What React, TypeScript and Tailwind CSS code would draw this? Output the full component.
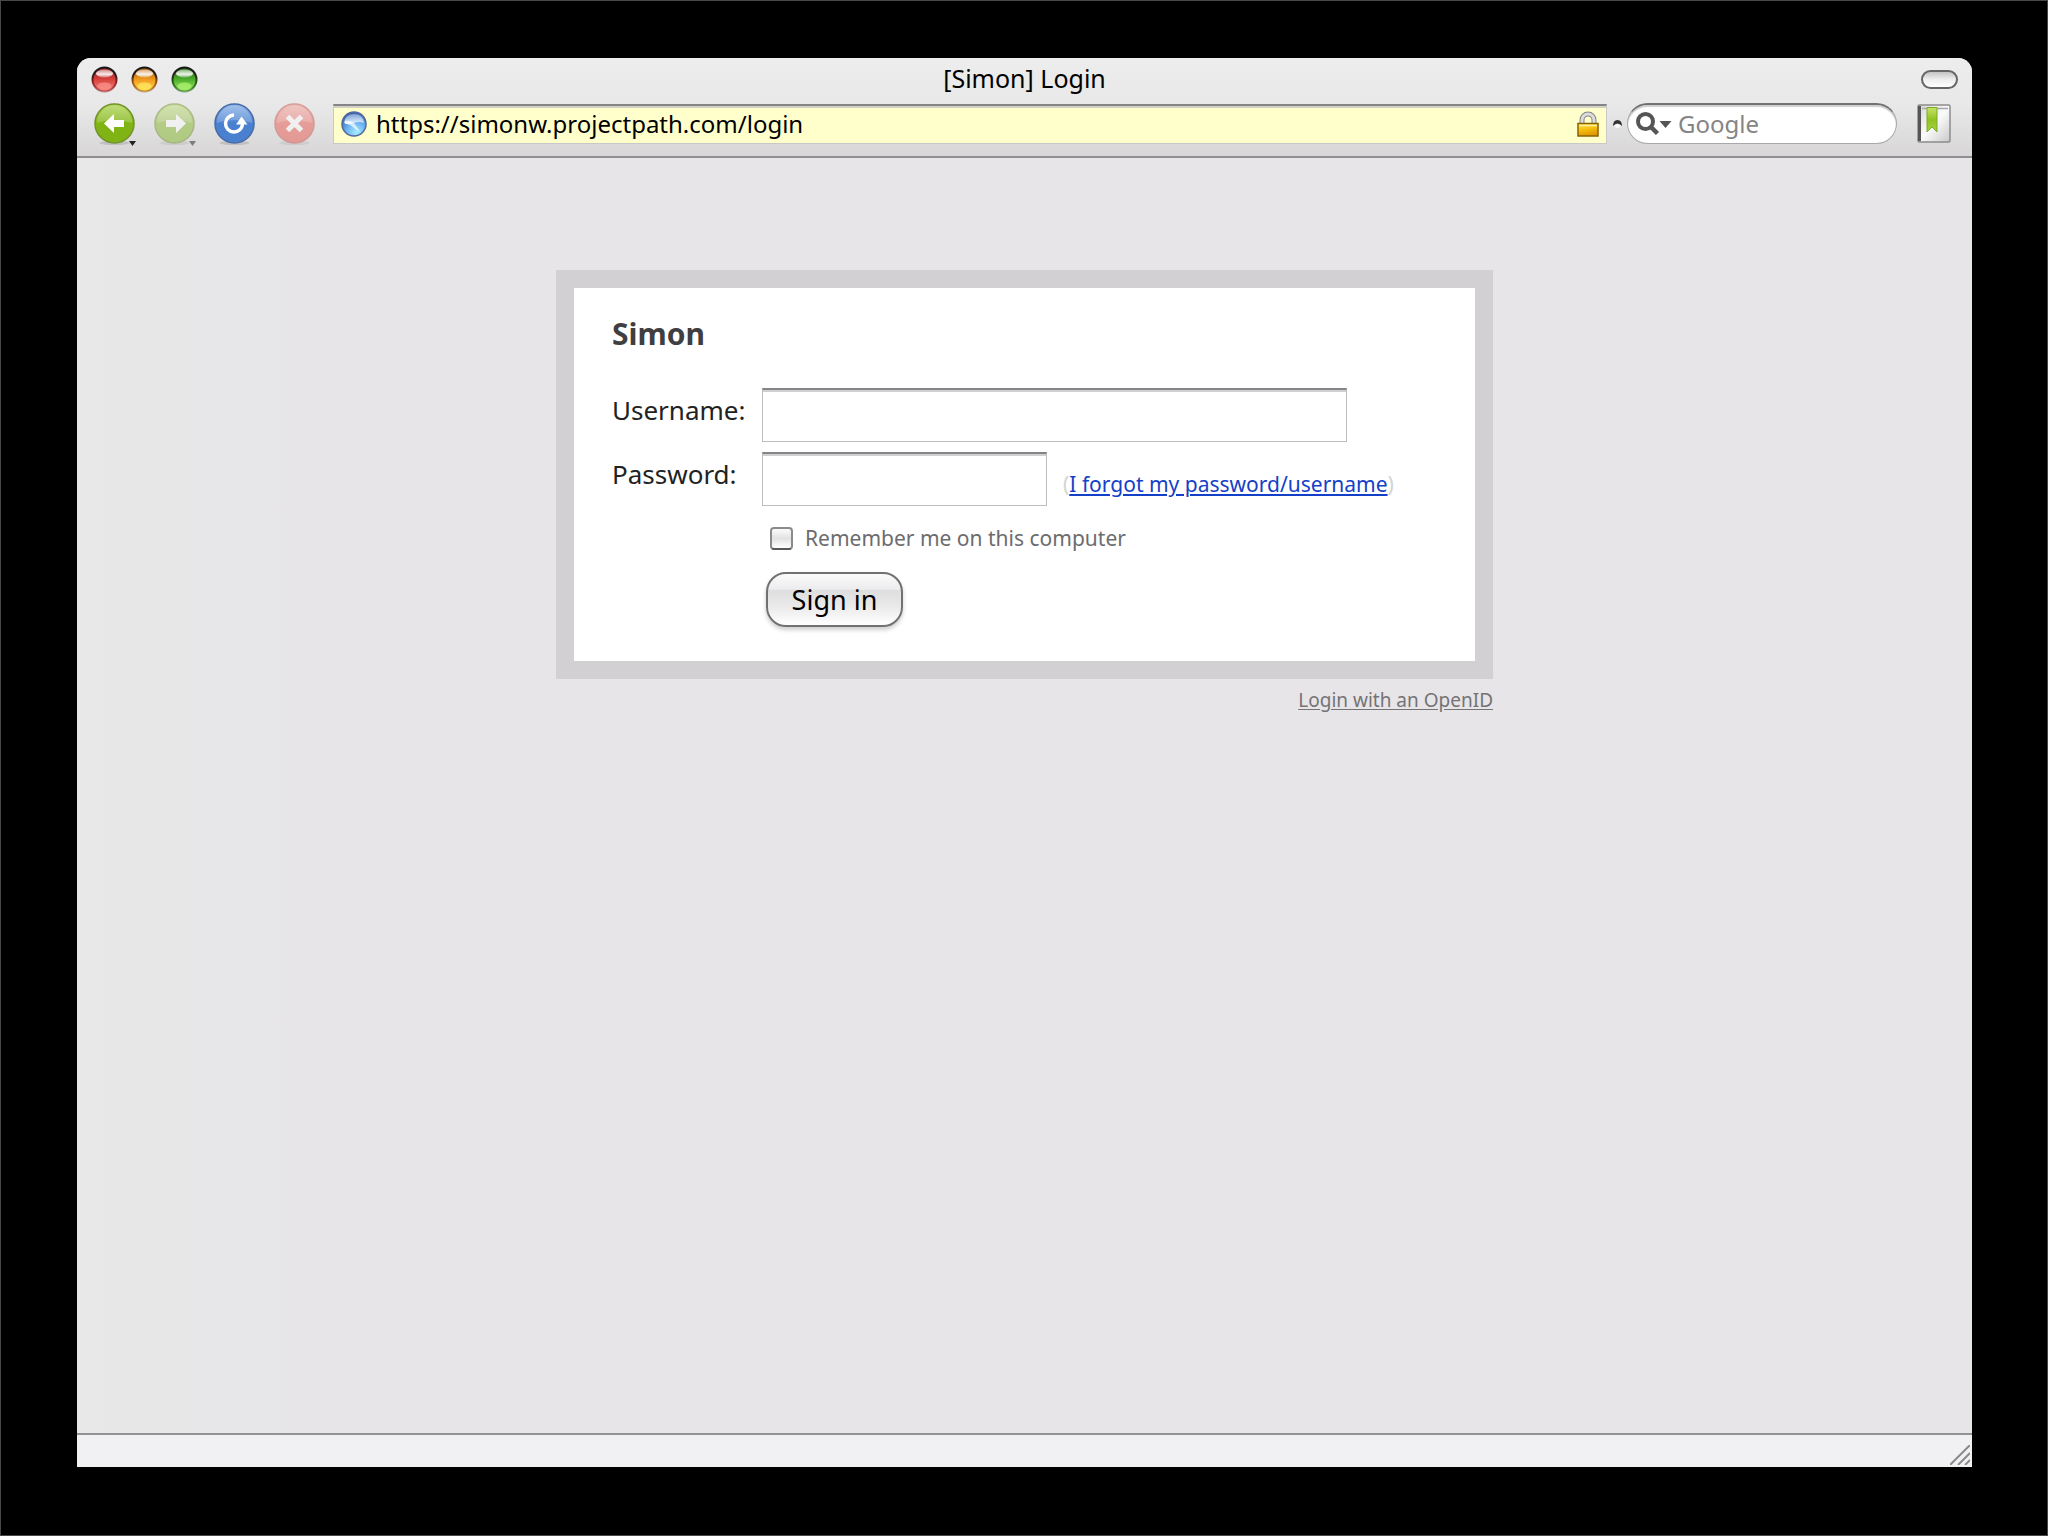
import React from "react";

function TrafficLight({ label, dark, mid, glow }: { label: string; dark: string; mid: string; glow: string }) {
  const id = label.toLowerCase();
  return (
    <button type="button" aria-label={label} className="size-[27px]">
      <svg viewBox="0 0 27 27" className="size-full">
        <defs>
          <linearGradient id={`${id}-body`} x1="0" y1="0" x2="0" y2="1">
            <stop offset="0" stopColor={dark} />
            <stop offset="0.5" stopColor={mid} />
            <stop offset="1" stopColor={glow} />
          </linearGradient>
          <linearGradient id={`${id}-rim`} x1="0" y1="0" x2="0" y2="1">
            <stop offset="0" stopColor="#151515" />
            <stop offset="0.35" stopColor="#2b2020" />
            <stop offset="0.6" stopColor={dark} />
            <stop offset="1" stopColor={dark} stopOpacity="0.5" />
          </linearGradient>
          <linearGradient id={`${id}-shine`} x1="0" y1="0" x2="0" y2="1">
            <stop offset="0" stopColor="#fff" stopOpacity="0.45" />
            <stop offset="0.6" stopColor="#fff" stopOpacity="0.9" />
            <stop offset="1" stopColor="#fff" stopOpacity="0.3" />
          </linearGradient>
        </defs>
        <circle cx="13.5" cy="13.5" r="12" fill={`url(#${id}-body)`} stroke={`url(#${id}-rim)`} strokeWidth="2" />
        <ellipse cx="13.5" cy="7.5" rx="8.5" ry="4" fill={`url(#${id}-shine)`} />
        <ellipse cx="13.5" cy="20" rx="7" ry="3.5" fill={glow} opacity="0.8" />
      </svg>
    </button>
  );
}

function NavButton({
  label,
  top,
  bottom,
  rim,
  faded,
  menu,
  children,
}: {
  label: string;
  top: string;
  bottom: string;
  rim: string;
  faded?: boolean;
  menu?: boolean;
  children: React.ReactNode;
}) {
  const id = label.toLowerCase();
  return (
    <button type="button" aria-label={label} className={faded ? "size-[41px] opacity-50" : "size-[41px]"}>
      <svg viewBox="0 0 41 41" className="size-full overflow-visible">
        <defs>
          <linearGradient id={`${id}-face`} x1="0" y1="0" x2="0" y2="1">
            <stop offset="0" stopColor={top} />
            <stop offset="0.5" stopColor={bottom} />
            <stop offset="1" stopColor={bottom} />
          </linearGradient>
        </defs>
        <ellipse cx="20.5" cy="40" rx="15" ry="2" fill="#000" opacity="0.12" />
        <circle cx="20.5" cy="20.5" r="19.5" fill={`url(#${id}-face)`} stroke={rim} strokeWidth="1.5" />
        <path d="M3 20 A17.5 17.5 0 0 1 38 20 Q20 14 3 20Z" fill="#fff" opacity="0.2" />
        {children}
        {menu && <path d="M35 38 h7 l-3.5 5z" fill="#222" />}
      </svg>
    </button>
  );
}

function Lock() {
  return (
    <svg viewBox="0 0 22 26" className="h-[26px] w-[22px] shrink-0" aria-hidden="true">
      <defs>
        <linearGradient id="lock-gold" x1="0" y1="0" x2="0.3" y2="1">
          <stop offset="0" stopColor="#ffe94a" />
          <stop offset="0.45" stopColor="#f7c516" />
          <stop offset="1" stopColor="#e09a00" />
        </linearGradient>
      </defs>
      <path d="M5 13 V9 a6 6 0 0 1 12 0 V13" fill="none" stroke="#858585" strokeWidth="5" />
      <path d="M5 13 V9 a6 6 0 0 1 12 0 V13" fill="none" stroke="#dcdcdc" strokeWidth="3" />
      <rect x="1" y="12.5" width="20" height="12.5" fill="url(#lock-gold)" stroke="#8a6100" strokeWidth="1.5" />
      <path d="M2 14.5 H20" stroke="#fff3a0" strokeWidth="1.5" />
    </svg>
  );
}

function Globe() {
  return (
    <svg viewBox="0 0 26 26" className="size-[26px] shrink-0" aria-hidden="true">
      <defs>
        <radialGradient id="globe-sea" cx="0.6" cy="0.85" r="0.85">
          <stop offset="0" stopColor="#a5ecff" />
          <stop offset="0.5" stopColor="#6ab2f2" />
          <stop offset="1" stopColor="#3458a8" />
        </radialGradient>
        <linearGradient id="globe-gloss" x1="0" y1="0" x2="0" y2="1">
          <stop offset="0" stopColor="#fff" stopOpacity="0.35" />
          <stop offset="1" stopColor="#fff" stopOpacity="0.75" />
        </linearGradient>
      </defs>
      <circle cx="13" cy="13" r="12" fill="url(#globe-sea)" stroke="#55699a" strokeWidth="1.5" />
      <path d="M3 12 Q4 3 13 3 Q22 3 23 12 Q18 10 13 12 Q8 14 3 12Z" fill="url(#globe-gloss)" />
      <path d="M4 10 Q9 9 13 12 Q16 16 19 21 Q14 18 10 14.5 Q7 12.5 4 13Z" fill="#fff" opacity="0.7" />
    </svg>
  );
}

function Bookmark() {
  return (
    <svg viewBox="0 0 34 39" className="h-[39px] w-[34px]">
      <defs>
        <linearGradient id="book-cover" x1="0" y1="0" x2="1" y2="1">
          <stop offset="0" stopColor="#d6d6d6" />
          <stop offset="0.5" stopColor="#fbfbfb" />
          <stop offset="1" stopColor="#c9c9c9" />
        </linearGradient>
        <linearGradient id="book-ribbon" x1="0" y1="0" x2="0" y2="1">
          <stop offset="0" stopColor="#c5e36a" />
          <stop offset="0.5" stopColor="#8fc31f" />
          <stop offset="1" stopColor="#a9d24a" />
        </linearGradient>
      </defs>
      <rect x="1" y="1" width="32" height="37" rx="1.5" fill="url(#book-cover)" stroke="#8c8c8c" strokeWidth="1.5" />
      <rect x="1" y="2" width="3" height="35" fill="#555" />
      <path d="M5 4.5 H31" stroke="#a8a8a8" strokeWidth="1.5" />
      <path d="M10 3.5 H20 V28 L15 23 L10 28Z" fill="url(#book-ribbon)" stroke="#7dab22" strokeWidth="1" />
    </svg>
  );
}

const fieldClass =
  "h-[54px] border border-t-2 border-[#bdbcbe] border-t-[#858487] bg-white px-2 text-2xl shadow-[inset_0_2px_0_#d0cfd2] outline-none";

export default function App() {
  return (
    <div className="flex min-h-screen flex-col border border-[#484848] bg-black pt-[57px] pr-[75px] pb-[68px] pl-[76px] font-['Noto_Sans','Open_Sans',sans-serif] text-black">
      <div className="flex flex-1 flex-col overflow-hidden rounded-t-[14px] bg-linear-to-r from-[#e8e8e8] to-[#e7e5e8] to-15%">
        <header className="border-b-2 border-[#8f8e90] bg-linear-to-b from-[#ededed] via-[#e8e8e8] to-[#d8d6d7]">
          <div className="grid h-[42px] grid-cols-[1fr_auto_1fr] items-center px-[14px]">
            <div className="flex gap-[13px]">
              <TrafficLight label="Close" dark="#8e1c1c" mid="#d8403c" glow="#f78d86" />
              <TrafficLight label="Minimize" dark="#9c5206" mid="#f09a1c" glow="#ffe35c" />
              <TrafficLight label="Zoom" dark="#1d5c10" mid="#4cae2b" glow="#a8f06c" />
            </div>
            <h1 className="text-[25px]">[Simon] Login</h1>
            <button
              type="button"
              aria-label="Toggle toolbar"
              className="h-[19px] w-[37px] justify-self-end rounded-full border-2 border-[#666] bg-linear-to-b from-[#c4c4c4] via-[#eeeeee] to-white"
            />
          </div>
          <div className="flex items-center gap-[18px] px-[17px] pt-[3px] pb-3">
            <nav aria-label="Navigation" className="flex gap-[19px]">
              <NavButton label="Back" top="#b3d65a" bottom="#7fb414" rim="#71922c" menu>
                <path d="M10 20.5 L20 11 V17 H30 V24 H20 V30Z" fill="#fff" />
              </NavButton>
              <NavButton label="Forward" top="#b3d65a" bottom="#86b92a" rim="#71922c" faded menu>
                <path d="M32 20.5 L22 11 V17 H12 V24 H22 V30Z" fill="#fff" />
              </NavButton>
              <NavButton label="Reload" top="#8db4ea" bottom="#4a80d0" rim="#486ca6">
                <path d="M20 12 A8.5 8.5 0 1 0 28.5 21" fill="none" stroke="#fff" strokeWidth="3.5" />
                <path d="M22 21.5 L27.5 13.500 L33.500 21.5Z" fill="#fff" />
              </NavButton>
              <NavButton label="Stop" top="#f58e86" bottom="#ea5a50" rim="#c4564f" faded>
                <path d="M13.5 13.5 L27.5 27.5 M27.5 13.5 L13.5 27.5" stroke="#fff" strokeWidth="5" />
              </NavButton>
            </nav>
            <div className="flex flex-1 items-center">
              <div className="flex h-10 flex-1 items-center gap-[9px] border border-t-2 border-[#c9c8c9] border-t-[#858487] bg-[#ffffcc] px-[7px] shadow-[inset_0_2px_0_#d2d1c4]">
                <Globe />
                <input
                  type="text"
                  aria-label="Address"
                  defaultValue="https://simonw.projectpath.com/login"
                  className="min-w-0 flex-1 bg-transparent text-2xl outline-none"
                />
                <Lock />
              </div>
              <svg viewBox="0 0 20 14" className="h-[14px] w-5 shrink-0" aria-hidden="true">
                <path d="M6 9 Q6 3 10.500 3 Q15 3 15 9 Q10.500 4 6 9Z" fill="#333" />
                <path d="M7 9 Q10.500 5 14 9 Q10.500 13 7 9Z" fill="#fff" opacity="0.800" />
              </svg>
              <div className="flex h-[41px] w-[270px] items-center gap-[6px] rounded-full border border-t-2 border-[#a9a8aa] border-t-[#717073] bg-white pr-4 pl-2 shadow-[inset_0_2px_1px_#cfcfcf]">
                <svg viewBox="0 0 36 24" className="h-6 w-9 shrink-0" aria-hidden="true">
                  <circle cx="9.500" cy="9.500" r="7.500" fill="none" stroke="#555" strokeWidth="4" />
                  <path d="M14.500 14.500 L21.500 21.500" stroke="#555" strokeWidth="4.500" />
                  <path d="M23.500 9 H35.500 L29.500 16Z" fill="#555" />
                </svg>
                <input
                  type="search"
                  aria-label="Search"
                  placeholder="Google"
                  className="min-w-0 flex-1 bg-transparent text-2xl outline-none placeholder:text-[#858585]"
                />
              </div>
              <button type="button" aria-label="Bookmarks" className="mr-1 ml-5">
                <Bookmark />
              </button>
            </div>
          </div>
        </header>

        <main className="mx-auto flex w-full max-w-[937px] flex-1 flex-col pt-[112px]">
          <form className="border-[18px] border-[#d2d0d3] bg-white px-[38px] pt-[24px] pb-[34px]" onSubmit={(e) => e.preventDefault()}>
            <h2 className="h-[76px] text-3xl leading-[44px] font-bold text-[#3f3f42]">Simon</h2>
            <div className="grid grid-cols-[150px_1fr] gap-y-[10px]">
              <label htmlFor="username" className="text-[26px] leading-[44px] text-[#222]">
                Username:
              </label>
              <input id="username" type="text" className={`${fieldClass} w-[585px]`} />
              <label htmlFor="password" className="text-[26px] leading-[44px] text-[#222]">
                Password:
              </label>
              <div className="flex items-center gap-4">
                <input id="password" type="password" className={`${fieldClass} w-[285px]`} />
                <p className="pt-3 text-[21px] whitespace-nowrap text-[#d4d4d0]">
                  (
                  <a href="#forgot" className="text-[#1440c8] underline underline-offset-2">
                    I forgot my password/username
                  </a>
                  )
                </p>
              </div>
              <div className="col-start-2 flex items-center gap-3 pt-[7px] pb-[7px] pl-2">
                <input
                  id="remember"
                  type="checkbox"
                  className="size-[23px] appearance-none rounded-[4px] border-2 border-[#8b8b8d] border-b-[#58585a] bg-linear-to-b from-[#fafafa] via-[#e2e2e4] to-white"
                />
                <label htmlFor="remember" className="text-[21px] text-[#6c6c6e]">
                  Remember me on this computer
                </label>
              </div>
              <button
                type="submit"
                className="col-start-2 ml-1 h-[55px] w-[137px] rounded-[20px] border-2 border-[#717173] bg-[linear-gradient(#fbfbfb,#ececee_30%,#dededf_32%,#e8e8e9_60%,#ffffff)] text-[27px] leading-none shadow-[0_3px_4px_#00000030]"
              >
                Sign in
              </button>
            </div>
          </form>
          <a href="#openid" className="mt-[7px] self-end text-[19px] text-[#747376] underline underline-offset-2">
            Login with an OpenID
          </a>
        </main>

        <footer className="flex h-[34px] items-end justify-end border-t-2 border-[#929193] bg-[#f1f0f2] p-[2px]">
          <svg viewBox="0 0 20 20" className="size-5" aria-hidden="true">
            <path d="M0 20 L20 0 M8 20 L20 8 M15 20 L20 15" stroke="#8b8b8b" strokeWidth="2" />
          </svg>
        </footer>
      </div>
    </div>
  );
}
